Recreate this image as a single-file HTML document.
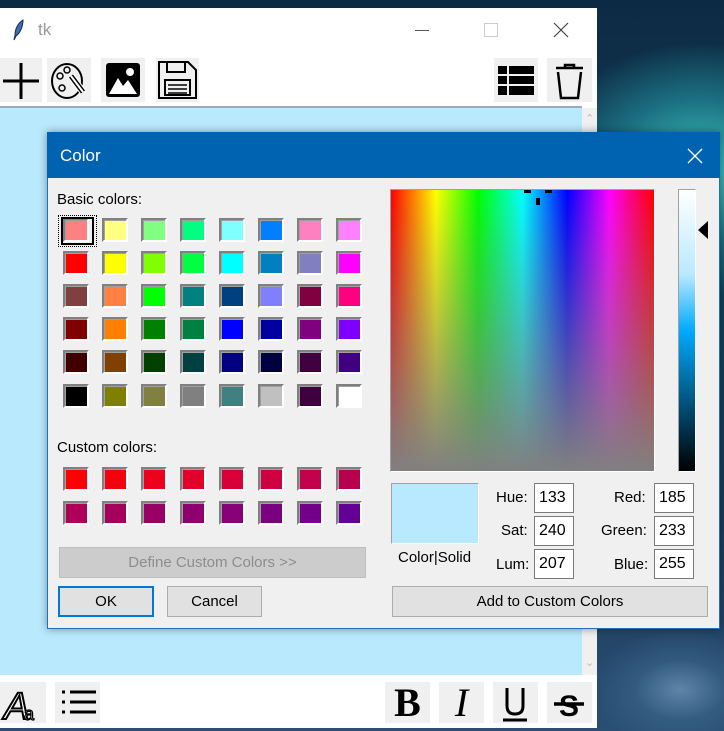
<!DOCTYPE html>
<html><head><meta charset="utf-8"><style>
*{margin:0;padding:0;box-sizing:border-box}
body{width:724px;height:731px;overflow:hidden;position:relative;font-family:"Liberation Sans",sans-serif;
background:radial-gradient(ellipse 90px 60px at 680px 690px,#5f86a8 0%,rgba(60,100,140,.6) 50%,transparent 100%),radial-gradient(ellipse 200px 160px at 700px 170px,#3fc9c0 0%,#1b6f80 45%,transparent 80%),linear-gradient(180deg,#0d2a44 0%,#12405a 40%,#1b3b5a 70%,#2a4f73 100%);}
.a{position:absolute}
.btn{position:absolute;background:#f0f0f0}
.sw{position:absolute;width:26px;height:24px;border:2px solid;border-color:#808080 #fff #fff #808080;box-shadow:inset 1px 1px 0 #a0a0a0}
.lbl{position:absolute;font-size:15px;color:#000}
.inp{position:absolute;width:40px;height:30px;background:#fff;border:1px solid #7a7a7a;font-size:16px;padding:5px 0 0 4px}
.wb{position:absolute;background:#e1e1e1;border:1px solid #adadad;font-size:15px;text-align:center}
</style></head><body>
<div class="a" style="left:0;top:8px;width:597px;height:720px;background:#fff"></div>
<svg class="a" style="left:12px;top:19px" width="14" height="22" viewBox="0 0 14 22"><path d="M11 1C6 4 3 10 3 16L2 21 4 17C8 14 11 8 11 1Z" fill="#3b6fb5" stroke="#1a2a4a"/></svg>
<div class="a" style="left:38px;top:20px;font-size:17px;color:#999">tk</div>
<div class="a" style="left:415px;top:30px;width:14px;height:1px;background:#555"></div>
<div class="a" style="left:484px;top:23px;width:14px;height:14px;border:1px solid #ccc"></div>
<svg class="a" style="left:553px;top:22px" width="16" height="16"><path d="M1 1L15 15M15 1L1 15" stroke="#444" stroke-width="1.2"/></svg>
<div class="btn" style="left:0;top:58px;width:42px;height:44px"><svg width="42" height="44"><path d="M21 5V41M3 23H39" stroke="#000" stroke-width="3"/></svg></div>
<div class="btn" style="left:47px;top:58px;width:44px;height:44px"><svg width="44" height="44"><ellipse cx="20" cy="23" rx="15" ry="17" fill="none" stroke="#000" stroke-width="2"/><circle cx="13" cy="18" r="3" fill="none" stroke="#000" stroke-width="1.5"/><circle cx="20" cy="12" r="3" fill="none" stroke="#000" stroke-width="1.5"/><circle cx="15" cy="30" r="3" fill="none" stroke="#000" stroke-width="1.5"/><path d="M24 18L36 34" stroke="#fff" stroke-width="7"/><path d="M24 18L36 34" stroke="#000" stroke-width="5"/><path d="M24 18L36 34" stroke="#fff" stroke-width="2"/></svg></div>
<div class="btn" style="left:101px;top:58px;width:44px;height:44px"><svg width="44" height="44"><rect x="5" y="5" width="34" height="34" rx="3" fill="#000"/><path d="M8 36L17 20 22 28 27 22 36 36Z" fill="#fff"/><circle cx="29" cy="14" r="4" fill="#fff"/></svg></div>
<div class="btn" style="left:156px;top:58px;width:43px;height:44px"><svg width="43" height="44"><path d="M3 4H32L40 12V40H3Z" fill="none" stroke="#000" stroke-width="2"/><rect x="11" y="4" width="18" height="10" fill="none" stroke="#000" stroke-width="2"/><rect x="9" y="22" width="25" height="15" fill="none" stroke="#000" stroke-width="2"/><path d="M12 27H31M12 31H31M12 35H31" stroke="#000" stroke-width="1.5"/></svg></div>
<div class="btn" style="left:494px;top:58px;width:44px;height:44px"><svg width="44" height="44"><rect x="4" y="8" width="36" height="29" fill="#000"/><path d="M4 17H40M4 27H40M14 8V37" stroke="#f0f0f0" stroke-width="2"/></svg></div>
<div class="btn" style="left:547px;top:58px;width:45px;height:44px"><svg width="45" height="44"><path d="M9 10H36M18 10V7H27V10" fill="none" stroke="#000" stroke-width="2.5"/><path d="M11 14L14 40H31L34 14" fill="none" stroke="#000" stroke-width="2.5"/></svg></div>
<div class="a" style="left:0;top:106px;width:582px;height:2px;background:#9ab"></div>
<div class="a" style="left:0;top:108px;width:582px;height:567px;background:#b9e9fc"></div>
<div class="a" style="left:582px;top:108px;width:15px;height:567px;background:#f0f0f0"></div>
<div class="a" style="left:585px;top:112px;font-size:11px;color:#bbb">&#8963;</div>
<div class="a" style="left:585px;top:656px;font-size:11px;color:#bbb">&#8964;</div>
<div class="btn" style="left:0;top:682px;width:46px;height:41px"><svg width="46" height="41"><text x="4" y="37" font-size="38" font-style="italic" font-family="Liberation Sans" fill="#fff" stroke="#000" stroke-width="2">A</text><text x="24" y="38" font-size="18" font-family="Liberation Sans" fill="#fff" stroke="#000" stroke-width="1.2">a</text></svg></div>
<div class="btn" style="left:55px;top:682px;width:45px;height:41px"><svg width="45" height="41"><path d="M7 10h3M7 20h3M7 30h3M15 10H41M15 20H41M15 30H41" stroke="#000" stroke-width="3"/></svg></div>
<div class="btn" style="left:385px;top:682px;width:45px;height:41px;font:bold 40px 'Liberation Serif',serif;text-align:center;line-height:41px">B</div>
<div class="btn" style="left:439px;top:682px;width:45px;height:41px;font:italic 40px 'Liberation Serif',serif;text-align:center;line-height:41px">I</div>
<div class="btn" style="left:493px;top:682px;width:45px;height:41px"><svg width="45" height="41"><path d="M14 6V24Q14 32 22 32Q30 32 30 24V6" fill="none" stroke="#000" stroke-width="3"/><path d="M10 38H34" stroke="#000" stroke-width="3"/></svg></div>
<div class="btn" style="left:547px;top:682px;width:45px;height:41px"><svg width="45" height="41"><text x="22" y="34" text-anchor="middle" font-size="30" font-weight="bold" font-family="Liberation Sans">S</text><path d="M7 22H37" stroke="#000" stroke-width="3.5"/></svg></div>
<div class="a" style="left:47px;top:132px;width:673px;height:497px;background:#f0f0f0;border:1px solid #1e70bb;box-shadow:0 0 8px rgba(0,0,0,.4)"></div>
<div class="a" style="left:47px;top:132px;width:673px;height:46px;background:#0063b1"></div>
<div class="a" style="left:60px;top:146px;color:#fff;font-size:17px">Color</div>
<svg class="a" style="left:687px;top:148px" width="16" height="16"><path d="M1 1L15 15M15 1L1 15" stroke="#fff" stroke-width="1.3"/></svg>
<div class="lbl" style="left:57px;top:191px">Basic colors:</div>
<div class="lbl" style="left:57px;top:439px">Custom colors:</div>
<div id="g"></div>
<div class="a" style="left:58px;top:215px;width:39px;height:32px;border:1px dotted #000"></div>
<div class="a" style="left:61px;top:217px;width:33px;height:28px;border:2px solid #000"></div>
<div class="wb" style="left:59px;top:547px;width:307px;height:31px;background:#cccccc;border-color:#bfbfbf;color:#8d8d8d;line-height:29px">Define Custom Colors &gt;&gt;</div>
<div class="wb" style="left:58px;top:586px;width:96px;height:31px;border:2px solid #0078d7;line-height:27px">OK</div>
<div class="wb" style="left:167px;top:586px;width:95px;height:31px;line-height:29px">Cancel</div>
<div class="a" style="left:390px;top:189px;width:265px;height:283px;border:1px solid #a0a0a0;border-right-color:#fff;border-bottom-color:#fff;background:linear-gradient(180deg,rgba(128,128,128,0),#808080),linear-gradient(90deg,#f00,#ff0 17%,#0f0 33%,#0ff 50%,#00f 67%,#f0f 83%,#f00)"></div>
<div class="a" style="left:524px;top:190px;width:7px;height:3px;background:#000"></div>
<div class="a" style="left:545px;top:190px;width:7px;height:3px;background:#000"></div>
<div class="a" style="left:536px;top:198px;width:4px;height:7px;background:#000"></div>
<div class="a" style="left:678px;top:189px;width:18px;height:283px;border:1px solid #a0a0a0;border-right-color:#fff;border-bottom-color:#fff;background:linear-gradient(180deg,#fff 0%,#b9e9ff 30%,#00aaff 50%,#005580 75%,#000 100%)"></div>
<svg class="a" style="left:698px;top:221px" width="11" height="18"><path d="M10 0V18L0 9Z" fill="#000"/></svg>
<div class="a" style="left:391px;top:483px;width:88px;height:61px;background:#b9e9ff;border:1px solid #a0a0a0;border-right-color:#fff;border-bottom-color:#fff"></div>
<div class="lbl" style="left:398px;top:549px;font-size:15px">Color|Solid</div>
<div class="lbl" style="left:496px;top:489px">Hue:</div>
<div class="lbl" style="left:501px;top:522px">Sat:</div>
<div class="lbl" style="left:496px;top:556px">Lum:</div>
<div class="lbl" style="left:614px;top:489px">Red:</div>
<div class="lbl" style="left:601px;top:522px">Green:</div>
<div class="lbl" style="left:614px;top:556px">Blue:</div>
<div class="inp" style="left:534px;top:483px">133</div>
<div class="inp" style="left:534px;top:516px">240</div>
<div class="inp" style="left:534px;top:549px">207</div>
<div class="inp" style="left:654px;top:483px">185</div>
<div class="inp" style="left:654px;top:516px">233</div>
<div class="inp" style="left:654px;top:549px">255</div>
<div class="wb" style="left:392px;top:586px;width:316px;height:31px;line-height:29px">Add to Custom Colors</div>
<script>
var b=["#ff8080","#ffff80","#80ff80","#00ff80","#80ffff","#0080ff","#ff80c0","#ff80ff","#ff0000","#ffff00","#80ff00","#00ff40","#00ffff","#0080c0","#8080c0","#ff00ff","#804040","#ff8040","#00ff00","#008080","#004080","#8080ff","#800040","#ff0080","#800000","#ff8000","#008000","#008040","#0000ff","#0000a0","#800080","#8000ff","#400000","#804000","#004000","#004040","#000080","#000040","#400040","#400080","#000000","#808000","#808040","#808080","#408080","#c0c0c0","#400040","#ffffff"];
var c=["#ff0000","#f5000f","#ec001c","#e2002b","#d80036","#cd0040","#c3004a","#b80050","#ae0058","#a4005c","#990066","#8f006e","#870077","#7a0080","#720089","#650094"];
var h="",ry=[218,251,284,317,350,384];
for(var i=0;i<48;i++)h+='<div class="sw" style="left:'+(63+39*(i%8))+'px;top:'+ry[Math.floor(i/8)]+'px;background:'+b[i]+'"></div>';
for(var i=0;i<16;i++)h+='<div class="sw" style="left:'+(63+39*(i%8))+'px;top:'+(i<8?467:501)+'px;background:'+c[i]+'"></div>';
document.getElementById("g").innerHTML=h;
</script>
</body></html>
